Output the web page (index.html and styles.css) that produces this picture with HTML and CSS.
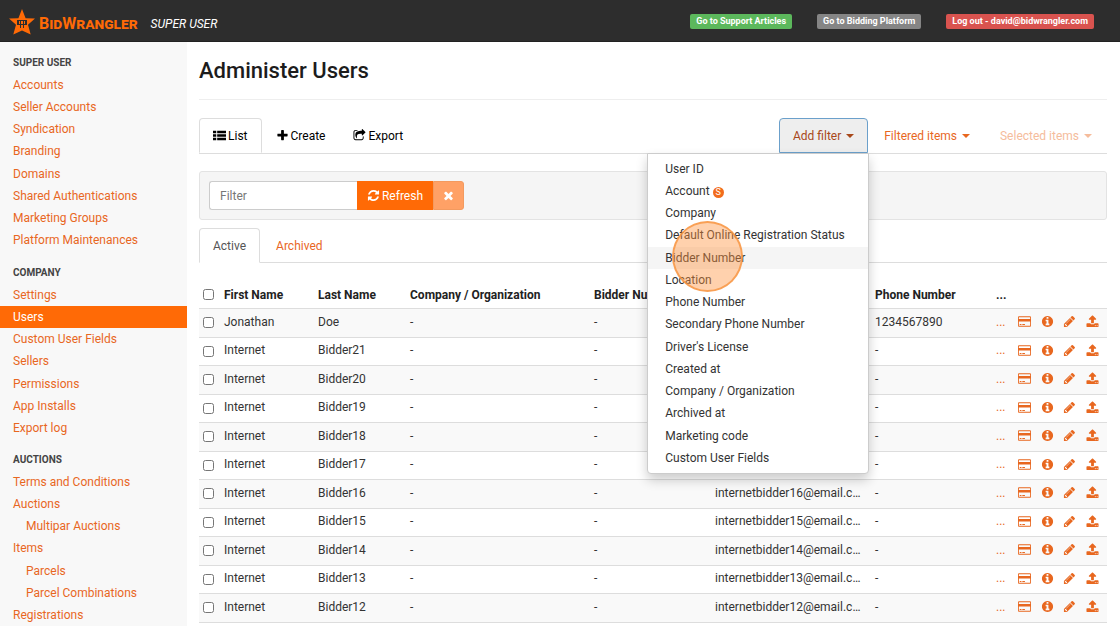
FILE: index.html
```html
<!DOCTYPE html>
<html lang="en">
<head>
<meta charset="utf-8">
<title>Administer Users</title>
<link rel="stylesheet" href="styles.css">
</head>
<body>
<svg class="sprite" aria-hidden="true">
  <symbol id="i-list" viewBox="0 0 1792 1792"><path d="M0 256h448v320H0zM576 256h1216v320H576zM0 736h448v320H0zM576 736h1216v320H576zM0 1216h448v320H0zM576 1216h1216v320H576z"/></symbol>
  <symbol id="i-plus" viewBox="0 0 1792 1792"><path d="M1600 736v192q0 40-28 68t-68 28h-416v416q0 40-28 68t-68 28h-192q-40 0-68-28t-28-68v-416h-416q-40 0-68-28t-28-68v-192q0-40 28-68t68-28h416v-416q0-40 28-68t68-28h192q40 0 68 28t28 68v416h416q40 0 68 28t28 68z"/></symbol>
  <symbol id="i-export" viewBox="0 0 1792 1792"><path d="M1472 1050v198q0 119-84.500 203.500T1184 1536H352q-119 0-203.500-84.500T64 1248V416q0-119 84.500-203.500T352 128h255q13 0 22.500 9.500T639 160q0 27-26 32-77 26-133 60-10 4-16 4H352q-66 0-113 47t-47 113v832q0 66 47 113t113 47h832q66 0 113-47t47-113v-175q0-18 18-28 28-13 54-39 16-16 35-8 21 8 21 29zM1709 493l-384 384q-18 19-45 19-12 0-25-5-39-17-39-59V640h-160q-323 0-438 131-119 137-74 473 3 23-20 34-8 2-12 2-16 0-26-13-10-14-21-31t-39.500-68.500-49.500-99.500-38.500-114-17.500-122q0-49 3.500-91t14-90 28-88 47-81.500 68.500-74 94.500-61.500 124.500-48.500 159.500-30.500 196.500-11h160V64q0-42 39-59 13-5 25-5 26 0 45 19l384 384q19 19 19 45t-19 45z"/></symbol>
  <symbol id="i-refresh" viewBox="0 0 1792 1792"><path d="M1639 1056q0 5-1 7-64 268-268 434.500t-478 166.500q-146 0-282.500-55t-243.500-157l-129 129q-19 19-45 19t-45-19-19-45v-448q0-26 19-45t45-19h448q26 0 45 19t19 45-19 45l-137 137q71 66 161 102t187 36q134 0 250-65t186-179q11-17 53-117 8-23 30-23h192q13 0 22.500 9.500t9.500 22.500zm25-800v448q0 26-19 45t-45 19h-448q-26 0-45-19t-19-45 19-45l138-138q-148-137-349-137-134 0-250 65t-186 179q-11 17-53 117-8 23-30 23h-199q-13 0-22.500-9.500t-9.500-22.500v-7q65-268 270-434.500t480-166.500q146 0 284 55.500t245 156.500l130-129q19-19 45-19t45 19 19 45z"/></symbol>
  <symbol id="i-times" viewBox="0 0 1792 1792"><path d="M1490 1322q0 40-28 68l-136 136q-28 28-68 28t-68-28l-294-294-294 294q-28 28-68 28t-68-28l-136-136q-28-28-28-68t28-68l294-294-294-294q-28-28-28-68t28-68l136-136q28-28 68-28t68 28l294 294 294-294q28-28 68-28t68 28l136 136q28 28 28 68t-28 68l-294 294 294 294q28 28 28 68z"/></symbol>
  <symbol id="i-card" viewBox="0 0 1920 1792"><path fill-rule="evenodd" d="M160 128h1600q66 0 113 47t47 113v1216q0 66-47 113t-113 47H160q-66 0-113-47T0 1504V288q0-66 47-113t113-47zm0 128q-32 0-32 32v224h1664V288q0-32-32-32zM128 896v608q0 32 32 32h1600q32 0 32-32V896zM256 1408v-128h256v128zm384 0v-128h384v128z"/></symbol>
  <symbol id="i-info" viewBox="0 0 1792 1792"><path d="M1152 1376v-160q0-14-9-23t-23-9h-96v-512q0-14-9-23t-23-9h-320q-14 0-23 9t-9 23v160q0 14 9 23t23 9h96v320h-96q-14 0-23 9t-9 23v160q0 14 9 23t23 9h448q14 0 23-9t9-23zm-128-896v-160q0-14-9-23t-23-9h-192q-14 0-23 9t-9 23v160q0 14 9 23t23 9h192q14 0 23-9t9-23zm640 416q0 209-103 385.500t-279.500 279.500-385.500 103-385.500-103-279.500-279.500-103-385.500 103-385.500 279.500-279.500 385.500-103 385.500 103 279.500 279.500 103 385.500z"/></symbol>
  <symbol id="i-pencil" viewBox="0 0 1792 1792"><path d="M491 1536l91-91-235-235-91 91v107h128v128h107zm523-928q0-22-22-22-10 0-17 7l-542 542q-7 7-7 17 0 22 22 22 10 0 17-7l542-542q7-7 7-17zm-54-192l416 416-832 832h-416v-416zm683 96q0 53-37 90l-166 166-416-416 166-165q36-38 90-38 53 0 91 38l235 234q37 39 37 91z"/></symbol>
  <symbol id="i-upload" viewBox="0 0 1792 1792"><path d="M1344 1472q0-26-19-45t-45-19-45 19-19 45 19 45 45 19 45-19 19-45zm256 0q0-26-19-45t-45-19-45 19-19 45 19 45 45 19 45-19 19-45zm128-224v320q0 40-28 68t-68 28h-1472q-40 0-68-28t-28-68v-320q0-40 28-68t68-28h427q21 56 70.500 92t110.500 36h256q61 0 110.500-36t70.500-92h427q40 0 68 28t28 68zm-325-648q-17 40-59 40h-256v448q0 26-19 45t-45 19h-256q-26 0-45-19t-19-45v-448h-256q-42 0-59-40-17-39 14-69l448-448q18-19 45-19t45 19l448 448q31 30 14 69z"/></symbol>
</svg>

<div class="app">
  <header class="topbar">
    <a class="brand" href="#">
      <svg class="brand-star" viewBox="0 0 26 26" aria-hidden="true">
        <path fill="#ff6a06" d="M13 0l3.600 9.200L26 9.600l-7 6.200L21.700 25.500 13 21.500 4.300 25.500l2.700-9.700L0 9.600l9.400-.4z"/>
        <path fill="#2d2d2d" d="M8 11h2v5H8zM16 11h2v5h-2zM11 11h1v8h-1zM14 11h1v8h-1zM8 11h10v1H8zM9 15h8v1H9z"/>
      </svg>
      <span class="brand-name">BidWrangler</span>
    </a>
    <em class="role">SUPER USER</em>
    <nav class="top-links">
      <a class="tag tag-green" href="#">Go to Support Articles</a>
      <a class="tag tag-grey" href="#">Go to Bidding Platform</a>
      <a class="tag tag-red" href="#">Log out - david@bidwrangler.com</a>
    </nav>
  </header>

  <div class="body">
    <nav class="sidebar">
      <h2>Super User</h2>
      <ul>
        <li><a href="#">Accounts</a></li>
        <li><a href="#">Seller Accounts</a></li>
        <li><a href="#">Syndication</a></li>
        <li><a href="#">Branding</a></li>
        <li><a href="#">Domains</a></li>
        <li><a href="#">Shared Authentications</a></li>
        <li><a href="#">Marketing Groups</a></li>
        <li><a href="#">Platform Maintenances</a></li>
      </ul>
      <h2>Company</h2>
      <ul>
        <li><a href="#">Settings</a></li>
        <li><a class="current" href="#" aria-current="page">Users</a></li>
        <li><a href="#">Custom User Fields</a></li>
        <li><a href="#">Sellers</a></li>
        <li><a href="#">Permissions</a></li>
        <li><a href="#">App Installs</a></li>
        <li><a href="#">Export log</a></li>
      </ul>
      <h2>Auctions</h2>
      <ul>
        <li><a href="#">Terms and Conditions</a></li>
        <li><a href="#">Auctions</a></li>
        <li><a class="nested" href="#">Multipar Auctions</a></li>
        <li><a href="#">Items</a></li>
        <li><a class="nested" href="#">Parcels</a></li>
        <li><a class="nested" href="#">Parcel Combinations</a></li>
        <li><a href="#">Registrations</a></li>
      </ul>
    </nav>

    <main class="content">
      <h1>Administer Users</h1>

      <div class="tabs">
        <a class="tab active" href="#"><svg class="icon"><use href="#i-list"/></svg>List</a>
        <a class="tab" href="#"><svg class="icon"><use href="#i-plus"/></svg>Create</a>
        <a class="tab" href="#"><svg class="icon"><use href="#i-export"/></svg>Export</a>
        <div class="tools">
          <div class="dropdown">
            <button class="tool open" type="button" aria-expanded="true">Add filter<span class="caret"></span></button>
            <ul class="menu">
              <li><a href="#">User ID</a></li>
              <li><a href="#">Account <span class="s-mark">S</span></a></li>
              <li><a href="#">Company</a></li>
              <li><a href="#">Default Online Registration Status</a></li>
              <li><a class="hovered" href="#">Bidder Number<span class="click-spot"></span></a></li>
              <li><a href="#">Location</a></li>
              <li><a href="#">Phone Number</a></li>
              <li><a href="#">Secondary Phone Number</a></li>
              <li><a href="#">Driver's License</a></li>
              <li><a href="#">Created at</a></li>
              <li><a href="#">Company / Organization</a></li>
              <li><a href="#">Archived at</a></li>
              <li><a href="#">Marketing code</a></li>
              <li><a href="#">Custom User Fields</a></li>
            </ul>
          </div>
          <button class="tool" type="button">Filtered items<span class="caret"></span></button>
          <button class="tool" type="button" disabled>Selected items<span class="caret"></span></button>
        </div>
      </div>

      <form class="filter-bar">
        <input class="filter-input" type="text" placeholder="Filter" aria-label="Filter">
        <button class="refresh" type="button"><svg class="icon"><use href="#i-refresh"/></svg>Refresh</button>
        <button class="clear" type="button" aria-label="Clear filter"><svg class="icon"><use href="#i-times"/></svg></button>
      </form>

      <div class="tabs scopes">
        <a class="tab active" href="#">Active</a>
        <a class="tab" href="#">Archived</a>
      </div>

      <table class="users">
        <colgroup>
          <col class="c-check"><col class="c-first"><col class="c-last"><col class="c-company"><col class="c-bidder"><col class="c-email"><col class="c-phone"><col class="c-more"><col class="c-actions">
        </colgroup>
        <thead>
          <tr>
            <th><input type="checkbox" aria-label="Select all"></th>
            <th>First Name</th>
            <th>Last Name</th>
            <th>Company / Organization</th>
            <th>Bidder Number</th>
            <th></th>
            <th>Phone Number</th>
            <th>...</th>
            <th></th>
          </tr>
        </thead>
        <tbody id="rows"></tbody>
      </table>
    </main>
  </div>
</div>
<script src="script.js"></script>
</body>
</html>
```
FILE: styles.css
```css
* { box-sizing: border-box; }

body {
  margin: 0;
  font-family: Roboto, "Liberation Sans", sans-serif;
  font-size: 12px;
  line-height: 20px;
  color: #333;
  background: #fff;
}

a { color: #e8671f; text-decoration: none; }
ul { list-style: none; margin: 0; padding: 0; }
button, input { font: inherit; }

.sprite { position: absolute; width: 0; height: 0; }
.icon { width: 13px; height: 13px; fill: currentColor; flex: none; }

.app { display: flex; flex-direction: column; height: 100vh; overflow: hidden; }

/* Top bar */
.topbar {
  display: flex;
  align-items: center;
  flex: none;
  height: 42px;
  padding: 2px 26px 0 9px;
  background: #2d2d2d;
  border-bottom: 1px solid #222;
}
.brand { display: flex; align-items: center; gap: 4px; color: #ff6a06; }
.brand-star { width: 26px; height: 26px; }
.brand-name { font-size: 16px; font-weight: 700; font-variant: small-caps; padding-top: 4px; }
.role { margin-left: 13px; padding-top: 4px; font-size: 12px; color: #fff; }
.top-links { display: flex; gap: 25px; margin-left: auto; }
.tag { padding: 0 6px; border-radius: 2px; font-size: 9px; font-weight: 700; line-height: 15px; color: #fff; }
.tag-green { background: #5cb85c; }
.tag-grey { background: #858585; }
.tag-red { background: #d9534f; }

.body { display: flex; flex: 1; min-height: 0; }

/* Sidebar */
.sidebar { flex: none; width: 187px; padding-top: 10px; background: #f8f8f8; overflow: hidden; }
.sidebar h2 {
  margin: 0;
  padding-left: 13px;
  font-size: 10px;
  font-weight: 700;
  line-height: 22px;
  text-transform: uppercase;
  color: #444;
}
.sidebar ul { padding-bottom: 10px; }
.sidebar a { display: block; padding-left: 13px; line-height: 22px; }
.sidebar li:nth-child(4n) { padding-bottom: 1px; }
.sidebar .nested { padding-left: 26px; }
.sidebar .current { background: #ff6a06; color: #fff; }

/* Content */
.content { flex: 1; min-width: 0; padding: 0 13px 0 12px; }
h1 {
  margin: 0 0 18px;
  padding: 14px 0 13px;
  font-size: 22px;
  font-weight: 500;
  line-height: 30px;
  color: #1c1c1c;
  border-bottom: 1px solid #eee;
}

.tabs { display: flex; border-bottom: 1px solid #ddd; }
.tab {
  display: flex;
  align-items: center;
  gap: 2px;
  height: 35px;
  margin-bottom: -1px;
  padding: 0 13px;
  border: 1px solid transparent;
  border-radius: 4px 4px 0 0;
  color: #000;
}
.tab.active { background: #fff; border-color: #ddd #ddd #fff; }
.scopes { gap: 2px; }
.scopes .tab { color: #e8671f; }
.scopes .tab.active { color: #555; }

.tools { display: flex; gap: 2px; margin-left: auto; padding-right: 1px; }
.dropdown { position: relative; }
.tool {
  display: flex;
  align-items: center;
  gap: 5px;
  height: 35px;
  padding: 0 13px;
  border: 1px solid transparent;
  border-radius: 4px 4px 0 0;
  background: none;
  color: #e8671f;
}
.tool.open { background: #eee; border-color: #6ba0cb; color: #a8481a; }
.tool:disabled { color: #f5bc9c; }
.caret { border: 4px solid transparent; border-top-color: currentColor; border-bottom: 0; }

.menu {
  position: absolute;
  z-index: 2;
  top: 100%;
  right: -1px;
  width: 222px;
  padding: 4px 0;
  background: #fff;
  border: 1px solid #ccc;
  border-radius: 0 0 4px 4px;
  box-shadow: 0 6px 12px rgba(0, 0, 0, .2);
}
.menu a { display: block; padding-left: 17px; line-height: 22px; color: #333; }
.menu li:nth-child(4n) { padding-bottom: 1px; }
.menu .hovered { position: relative; background: #f5f5f5; }
.s-mark {
  display: inline-block;
  width: 11px;
  border-radius: 50%;
  background: #f26c1c;
  color: #fff;
  font-size: 9px;
  line-height: 11px;
  text-align: center;
}
.click-spot {
  position: absolute;
  z-index: 3;
  top: -26px;
  left: 24px;
  width: 71px;
  height: 71px;
  border: 2px solid rgba(247, 148, 62, .8);
  border-radius: 50%;
  background: rgba(255, 145, 60, .42);
}

/* Filter bar */
.filter-bar {
  display: flex;
  margin: 17px 0 8px;
  padding: 9px;
  background: #f5f5f5;
  border: 1px solid #e3e3e3;
  border-radius: 3px;
}
.filter-input {
  width: 148px;
  height: 29px;
  padding: 0 10px;
  border: 1px solid #ccc;
  border-right: 0;
  border-radius: 3px 0 0 3px;
  background: #fff;
}
.filter-input::placeholder { color: #777; }
.refresh, .clear {
  display: flex;
  align-items: center;
  justify-content: center;
  gap: 2px;
  height: 29px;
  border: 0;
  color: #fff;
}
.refresh { width: 76px; padding: 0; background: #ff6a06; }
.clear { width: 31px; padding: 0; background: #ffa166; border: 1px solid #f39a5f; border-radius: 0 3px 3px 0; }

/* Users table */
.users {
  width: 100%;
  margin-top: 17px;
  table-layout: fixed;
  border-collapse: collapse;
  border-bottom: 1px solid #ddd;
}
.users th, .users td {
  padding: 0 7px 0 3px;
  text-align: left;
  white-space: nowrap;
  overflow: hidden;
  text-overflow: ellipsis;
}
.users th { height: 28px; padding-top: 2px; font-weight: 700; color: #222; }
.users td { border-top: 1px solid #ddd; padding-bottom: 2px; }
.users tbody tr { height: 28px; }
.users tbody tr:nth-child(odd) { height: 29px; background: #f9f9f9; }
.users input { display: block; width: 11px; height: 11px; margin: 0 0 0 1px; }
.users td input { margin-top: 2px; }
.c-check { width: 22px; }
.c-first { width: 94px; }
.c-last { width: 92px; }
.c-company { width: 184px; }
.c-bidder { width: 121px; }
.c-email { width: 160px; }
.c-phone { width: 121px; }
.c-more { width: 23px; }
.users .more { padding-right: 3px; color: #e8671f; }
.users .actions { padding: 0 8px 2px 2px; }
.action-list { display: flex; align-items: center; justify-content: space-between; }
.action-list a { display: flex; }
```
FILE: script.js
```js
const icons = [["card", "Payment"], ["info", "Details"], ["pencil", "Edit"], ["upload", "Upload"]];
const users = [{ first: "Jonathan", last: "Doe", phone: "1234567890" }];
for (let n = 21; n >= 12; n--) {
  const email = n <= 16 ? "internetbidder" + n + "@email.com" : "";
  users.push({ first: "Internet", last: "Bidder" + n, email, phone: "-" });
}

const actions = icons.map(([id, label]) =>
  `<a href="#" aria-label="${label}"><svg class="icon"><use href="#i-${id}"/></svg></a>`
).join("");

document.getElementById("rows").innerHTML = users.map(u => `<tr>
  <td><input type="checkbox" aria-label="Select ${u.first} ${u.last}"></td>
  <td>${u.first}</td><td>${u.last}</td><td>-</td><td>-</td>
  <td>${u.email || ""}</td><td>${u.phone}</td>
  <td class="more">...</td>
  <td class="actions"><div class="action-list">${actions}</div></td>
</tr>`).join("");
```
